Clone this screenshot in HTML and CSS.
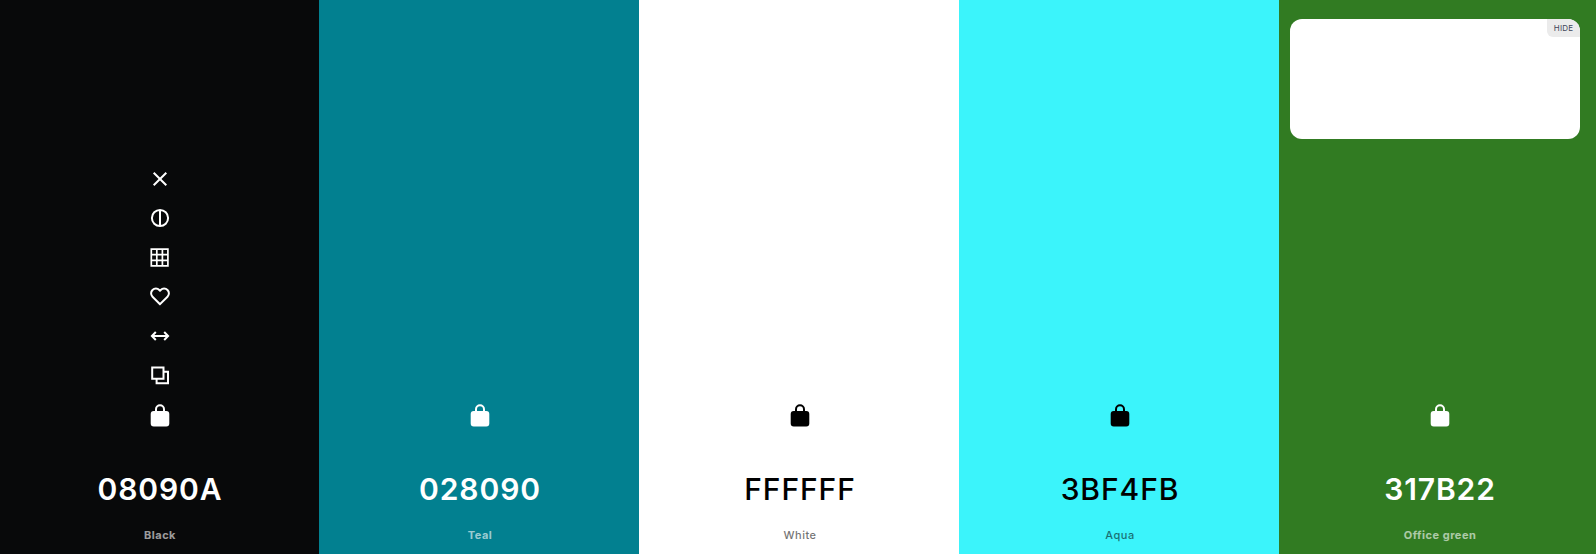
FILE: index.html
```html
<!DOCTYPE html>
<html lang="en">
<head>
<meta charset="utf-8">
<title>Palette</title>
<link rel="stylesheet" href="styles.css">
</head>
<body>
<main class="palette">
  <section class="swatch swatch-black on-dark">
    <div class="tools">
      <svg class="icon" viewBox="0 0 24 24"><path d="M5.700 5.700l12.600 12.600M18.300 5.700L5.700 18.300"/></svg>
      <svg class="icon" viewBox="0 0 24 24"><circle cx="12" cy="12" r="8.100"/><path d="M12 4v16"/></svg>
      <svg class="icon icon-thin" viewBox="0 0 24 24"><path d="M3.300 3.200h16.600v16.600H3.300zM8.800 3.200v16.600M14.400 3.200v16.600M3.300 8.700h16.600M3.300 14.300h16.600"/></svg>
      <svg class="icon" viewBox="0 0 24 24"><path d="M12 19.200L4.500 11.700a4.700 4.700 0 0 1 0-6.700 4.800 4.800 0 0 1 6.800 0l.7.700.7-.7a4.800 4.800 0 0 1 6.800 0 4.700 4.700 0 0 1 0 6.700z"/></svg>
      <svg class="icon" viewBox="0 0 24 24"><path d="M4 12h16M7.800 8L3.900 12l3.900 4M16.200 8l3.900 4-3.900 4"/></svg>
      <svg class="icon" viewBox="0 0 24 24"><path d="M4.200 3.500h11.300v11.300H4.200zM15.500 7.700h4.500v11.600H8.600v-4.500"/></svg>
      <svg class="icon" viewBox="0 0 24 24"><path class="fill" d="M7 8V6.200a5 5 0 0 1 10 0V8h1.300a3 3 0 0 1 3 3v9.500a3 3 0 0 1-3 3H5.700a3 3 0 0 1-3-3V11a3 3 0 0 1 3-3zm2 0h6V6.200a3 3 0 0 0-6 0z"/></svg>
    </div>
    <h2 class="hex">08090A</h2>
    <p class="name">Black</p>
  </section>
  <section class="swatch swatch-teal on-dark">
    <div class="tools">
      <svg class="icon" viewBox="0 0 24 24"><path class="fill" d="M7 8V6.200a5 5 0 0 1 10 0V8h1.300a3 3 0 0 1 3 3v9.500a3 3 0 0 1-3 3H5.700a3 3 0 0 1-3-3V11a3 3 0 0 1 3-3zm2 0h6V6.200a3 3 0 0 0-6 0z"/></svg>
    </div>
    <h2 class="hex">028090</h2>
    <p class="name">Teal</p>
  </section>
  <section class="swatch swatch-white on-light">
    <div class="tools">
      <svg class="icon" viewBox="0 0 24 24"><path class="fill" d="M7 8V6.200a5 5 0 0 1 10 0V8h1.300a3 3 0 0 1 3 3v9.500a3 3 0 0 1-3 3H5.700a3 3 0 0 1-3-3V11a3 3 0 0 1 3-3zm2 0h6V6.200a3 3 0 0 0-6 0z"/></svg>
    </div>
    <h2 class="hex">FFFFFF</h2>
    <p class="name">White</p>
  </section>
  <section class="swatch swatch-aqua on-light">
    <div class="tools">
      <svg class="icon" viewBox="0 0 24 24"><path class="fill" d="M7 8V6.200a5 5 0 0 1 10 0V8h1.300a3 3 0 0 1 3 3v9.500a3 3 0 0 1-3 3H5.700a3 3 0 0 1-3-3V11a3 3 0 0 1 3-3zm2 0h6V6.200a3 3 0 0 0-6 0z"/></svg>
    </div>
    <h2 class="hex">3BF4FB</h2>
    <p class="name">Aqua</p>
  </section>
  <section class="swatch swatch-green on-dark">
    <aside class="ad-card"><button class="hide" type="button">HIDE</button></aside>
    <div class="tools">
      <svg class="icon" viewBox="0 0 24 24"><path class="fill" d="M7 8V6.200a5 5 0 0 1 10 0V8h1.300a3 3 0 0 1 3 3v9.500a3 3 0 0 1-3 3H5.700a3 3 0 0 1-3-3V11a3 3 0 0 1 3-3zm2 0h6V6.200a3 3 0 0 0-6 0z"/></svg>
    </div>
    <h2 class="hex">317B22</h2>
    <p class="name">Office green</p>
  </section>
</main>
</body>
</html>
```

FILE: styles.css
```css
* { box-sizing: border-box; }
html, body { height: 100%; margin: 0; }
body { font-family: Inter, "Liberation Sans", sans-serif; overflow: hidden; }

.palette {
  display: grid;
  grid-template-columns: 319px repeat(4, 320px);
  height: 554px;
  overflow: hidden;
}

.swatch {
  position: relative;
  min-width: 0;
  display: flex;
  flex-direction: column;
  align-items: center;
  justify-content: flex-end;
  padding: 0 0 11px 2px;
}
.swatch-black { background: #08090a; padding-left: 1px; }
.swatch-teal { background: #028090; }
.swatch-white { background: #ffffff; }
.swatch-aqua { background: #3bf4fb; }
.swatch-green { background: #317b22; }

.on-dark { color: #ffffff; }
.on-light { color: #000000; }

.tools {
  display: flex;
  flex-direction: column;
  align-items: center;
  gap: 15.330px;
  margin-bottom: 42px;
}
.icon {
  display: block;
  width: 24px;
  height: 24px;
  fill: none;
  stroke: currentColor;
  stroke-width: 2;
}
.icon-thin { stroke-width: 1.700; }
.icon .fill { fill: currentColor; stroke: none; fill-rule: evenodd; }

.hex {
  margin: 0;
  font-size: 30px;
  line-height: 40px;
  font-weight: 600;
  letter-spacing: 0.900px;
}
.on-light .hex { font-weight: 500; }
.name {
  margin: 18px 0 0;
  line-height: 16px;
  font-size: 11px;
  font-weight: 700;
  letter-spacing: 0.500px;
  opacity: 0.6;
}
.on-light .name { font-weight: 500; opacity: 0.55; }

.ad-card {
  position: absolute;
  top: 19px;
  left: 11px;
  width: 290px;
  height: 120px;
  background: #ffffff;
  border-radius: 12px;
  overflow: hidden;
}
.hide {
  position: absolute;
  top: 0;
  right: 0;
  width: 33px;
  height: 18px;
  padding: 0;
  border: 0;
  border-bottom-left-radius: 6px;
  background: #ebebeb;
  color: #3f4459;
  font-family: Inter, "Liberation Sans", sans-serif;
  font-size: 8px;
  letter-spacing: 0.200px;
  line-height: 18px;
}
```
